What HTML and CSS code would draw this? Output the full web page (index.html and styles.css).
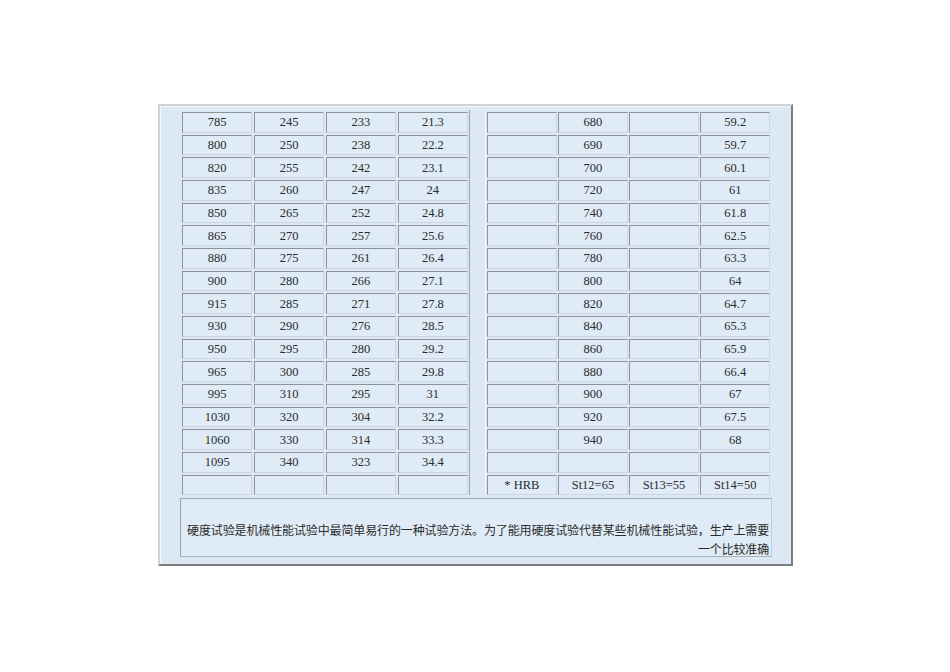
FILE: index.html
```html
<!DOCTYPE html>
<html lang="zh">
<head>
<meta charset="utf-8">
<title>硬度对照表</title>
<link rel="stylesheet" href="styles.css">
</head>
<body>
<div class="frame">
  <div class="tables">
    <div class="grid left">
      <div class="c">785</div><div class="c">245</div><div class="c">233</div><div class="c">21.3</div>
      <div class="c">800</div><div class="c">250</div><div class="c">238</div><div class="c">22.2</div>
      <div class="c">820</div><div class="c">255</div><div class="c">242</div><div class="c">23.1</div>
      <div class="c">835</div><div class="c">260</div><div class="c">247</div><div class="c">24</div>
      <div class="c">850</div><div class="c">265</div><div class="c">252</div><div class="c">24.8</div>
      <div class="c">865</div><div class="c">270</div><div class="c">257</div><div class="c">25.6</div>
      <div class="c">880</div><div class="c">275</div><div class="c">261</div><div class="c">26.4</div>
      <div class="c">900</div><div class="c">280</div><div class="c">266</div><div class="c">27.1</div>
      <div class="c">915</div><div class="c">285</div><div class="c">271</div><div class="c">27.8</div>
      <div class="c">930</div><div class="c">290</div><div class="c">276</div><div class="c">28.5</div>
      <div class="c">950</div><div class="c">295</div><div class="c">280</div><div class="c">29.2</div>
      <div class="c">965</div><div class="c">300</div><div class="c">285</div><div class="c">29.8</div>
      <div class="c">995</div><div class="c">310</div><div class="c">295</div><div class="c">31</div>
      <div class="c">1030</div><div class="c">320</div><div class="c">304</div><div class="c">32.2</div>
      <div class="c">1060</div><div class="c">330</div><div class="c">314</div><div class="c">33.3</div>
      <div class="c">1095</div><div class="c">340</div><div class="c">323</div><div class="c">34.4</div>
      <div class="c"></div><div class="c"></div><div class="c"></div><div class="c"></div>
    </div>
    <div class="divider"></div>
    <div class="grid right">
      <div class="c"></div><div class="c">680</div><div class="c"></div><div class="c">59.2</div>
      <div class="c"></div><div class="c">690</div><div class="c"></div><div class="c">59.7</div>
      <div class="c"></div><div class="c">700</div><div class="c"></div><div class="c">60.1</div>
      <div class="c"></div><div class="c">720</div><div class="c"></div><div class="c">61</div>
      <div class="c"></div><div class="c">740</div><div class="c"></div><div class="c">61.8</div>
      <div class="c"></div><div class="c">760</div><div class="c"></div><div class="c">62.5</div>
      <div class="c"></div><div class="c">780</div><div class="c"></div><div class="c">63.3</div>
      <div class="c"></div><div class="c">800</div><div class="c"></div><div class="c">64</div>
      <div class="c"></div><div class="c">820</div><div class="c"></div><div class="c">64.7</div>
      <div class="c"></div><div class="c">840</div><div class="c"></div><div class="c">65.3</div>
      <div class="c"></div><div class="c">860</div><div class="c"></div><div class="c">65.9</div>
      <div class="c"></div><div class="c">880</div><div class="c"></div><div class="c">66.4</div>
      <div class="c"></div><div class="c">900</div><div class="c"></div><div class="c">67</div>
      <div class="c"></div><div class="c">920</div><div class="c"></div><div class="c">67.5</div>
      <div class="c"></div><div class="c">940</div><div class="c"></div><div class="c">68</div>
      <div class="c"></div><div class="c"></div><div class="c"></div><div class="c"></div>
      <div class="c">* HRB</div><div class="c">St12=65</div><div class="c">St13=55</div><div class="c">St14=50</div>
    </div>
  </div>
  <div class="note">硬度试验是机械性能试验中最简单易行的一种试验方法。为了能用硬度试验代替某些机械性能试验，生产上需要一个比较准确</div>
</div>
</body>
</html>
```
FILE: styles.css
```css
html, body {
  margin: 0;
  padding: 0;
  background: #ffffff;
}

.frame {
  box-sizing: border-box;
  margin: 104px 0 0 158px;
  width: 635px;
  height: 462px;
  border: 2px solid;
  border-color: #cdd3d9 #7c7c7c #7c7c7c #cdd3d9;
  background: #dce9f5;
  padding: 6px 0 0 20px;
  box-shadow: inset 1px 1px 0 #f2f6fa;
}

.tables {
  display: flex;
  align-items: stretch;
}

.grid {
  display: grid;
  grid-template-columns: repeat(4, 1fr);
  grid-auto-rows: 20.67px;
  gap: 2px 1.5px;
}

.grid.left {
  width: 286px;
  margin-left: 2px;
}

.divider {
  width: 1px;
  margin-left: 1px;
  margin-top: -2px;
  background: #9aa3ab;
  box-shadow: 16px 0 0 #f0f5fa;
}

.grid.right {
  width: 283px;
  margin-left: 17px;
}

.c {
  box-sizing: border-box;
  border: 1px solid;
  border-color: #8e9398 #cfd6dc #cfd6dc #8e9398;
  background: #dfebf6;
  display: flex;
  align-items: center;
  justify-content: center;
  padding-top: 1px;
  font-family: "Liberation Serif", "Noto Sans CJK SC", serif;
  font-size: 12.5px;
  color: #2b2b2b;
  white-space: nowrap;
}

.note {
  box-sizing: border-box;
  width: 592px;
  height: 59px;
  margin-top: 3px;
  border: 1px solid;
  border-color: #9ea6ad #c3cbd2 #aab2b9 #9ea6ad;
  background: #dfebf6;
  padding: 21px 2px 0 6px;
  font-family: "Noto Sans CJK SC", sans-serif;
  font-size: 12px;
  letter-spacing: -0.16px;
  line-height: 19px;
  color: #2b2b2b;
  text-align: justify;
  text-align-last: right;
}
```
